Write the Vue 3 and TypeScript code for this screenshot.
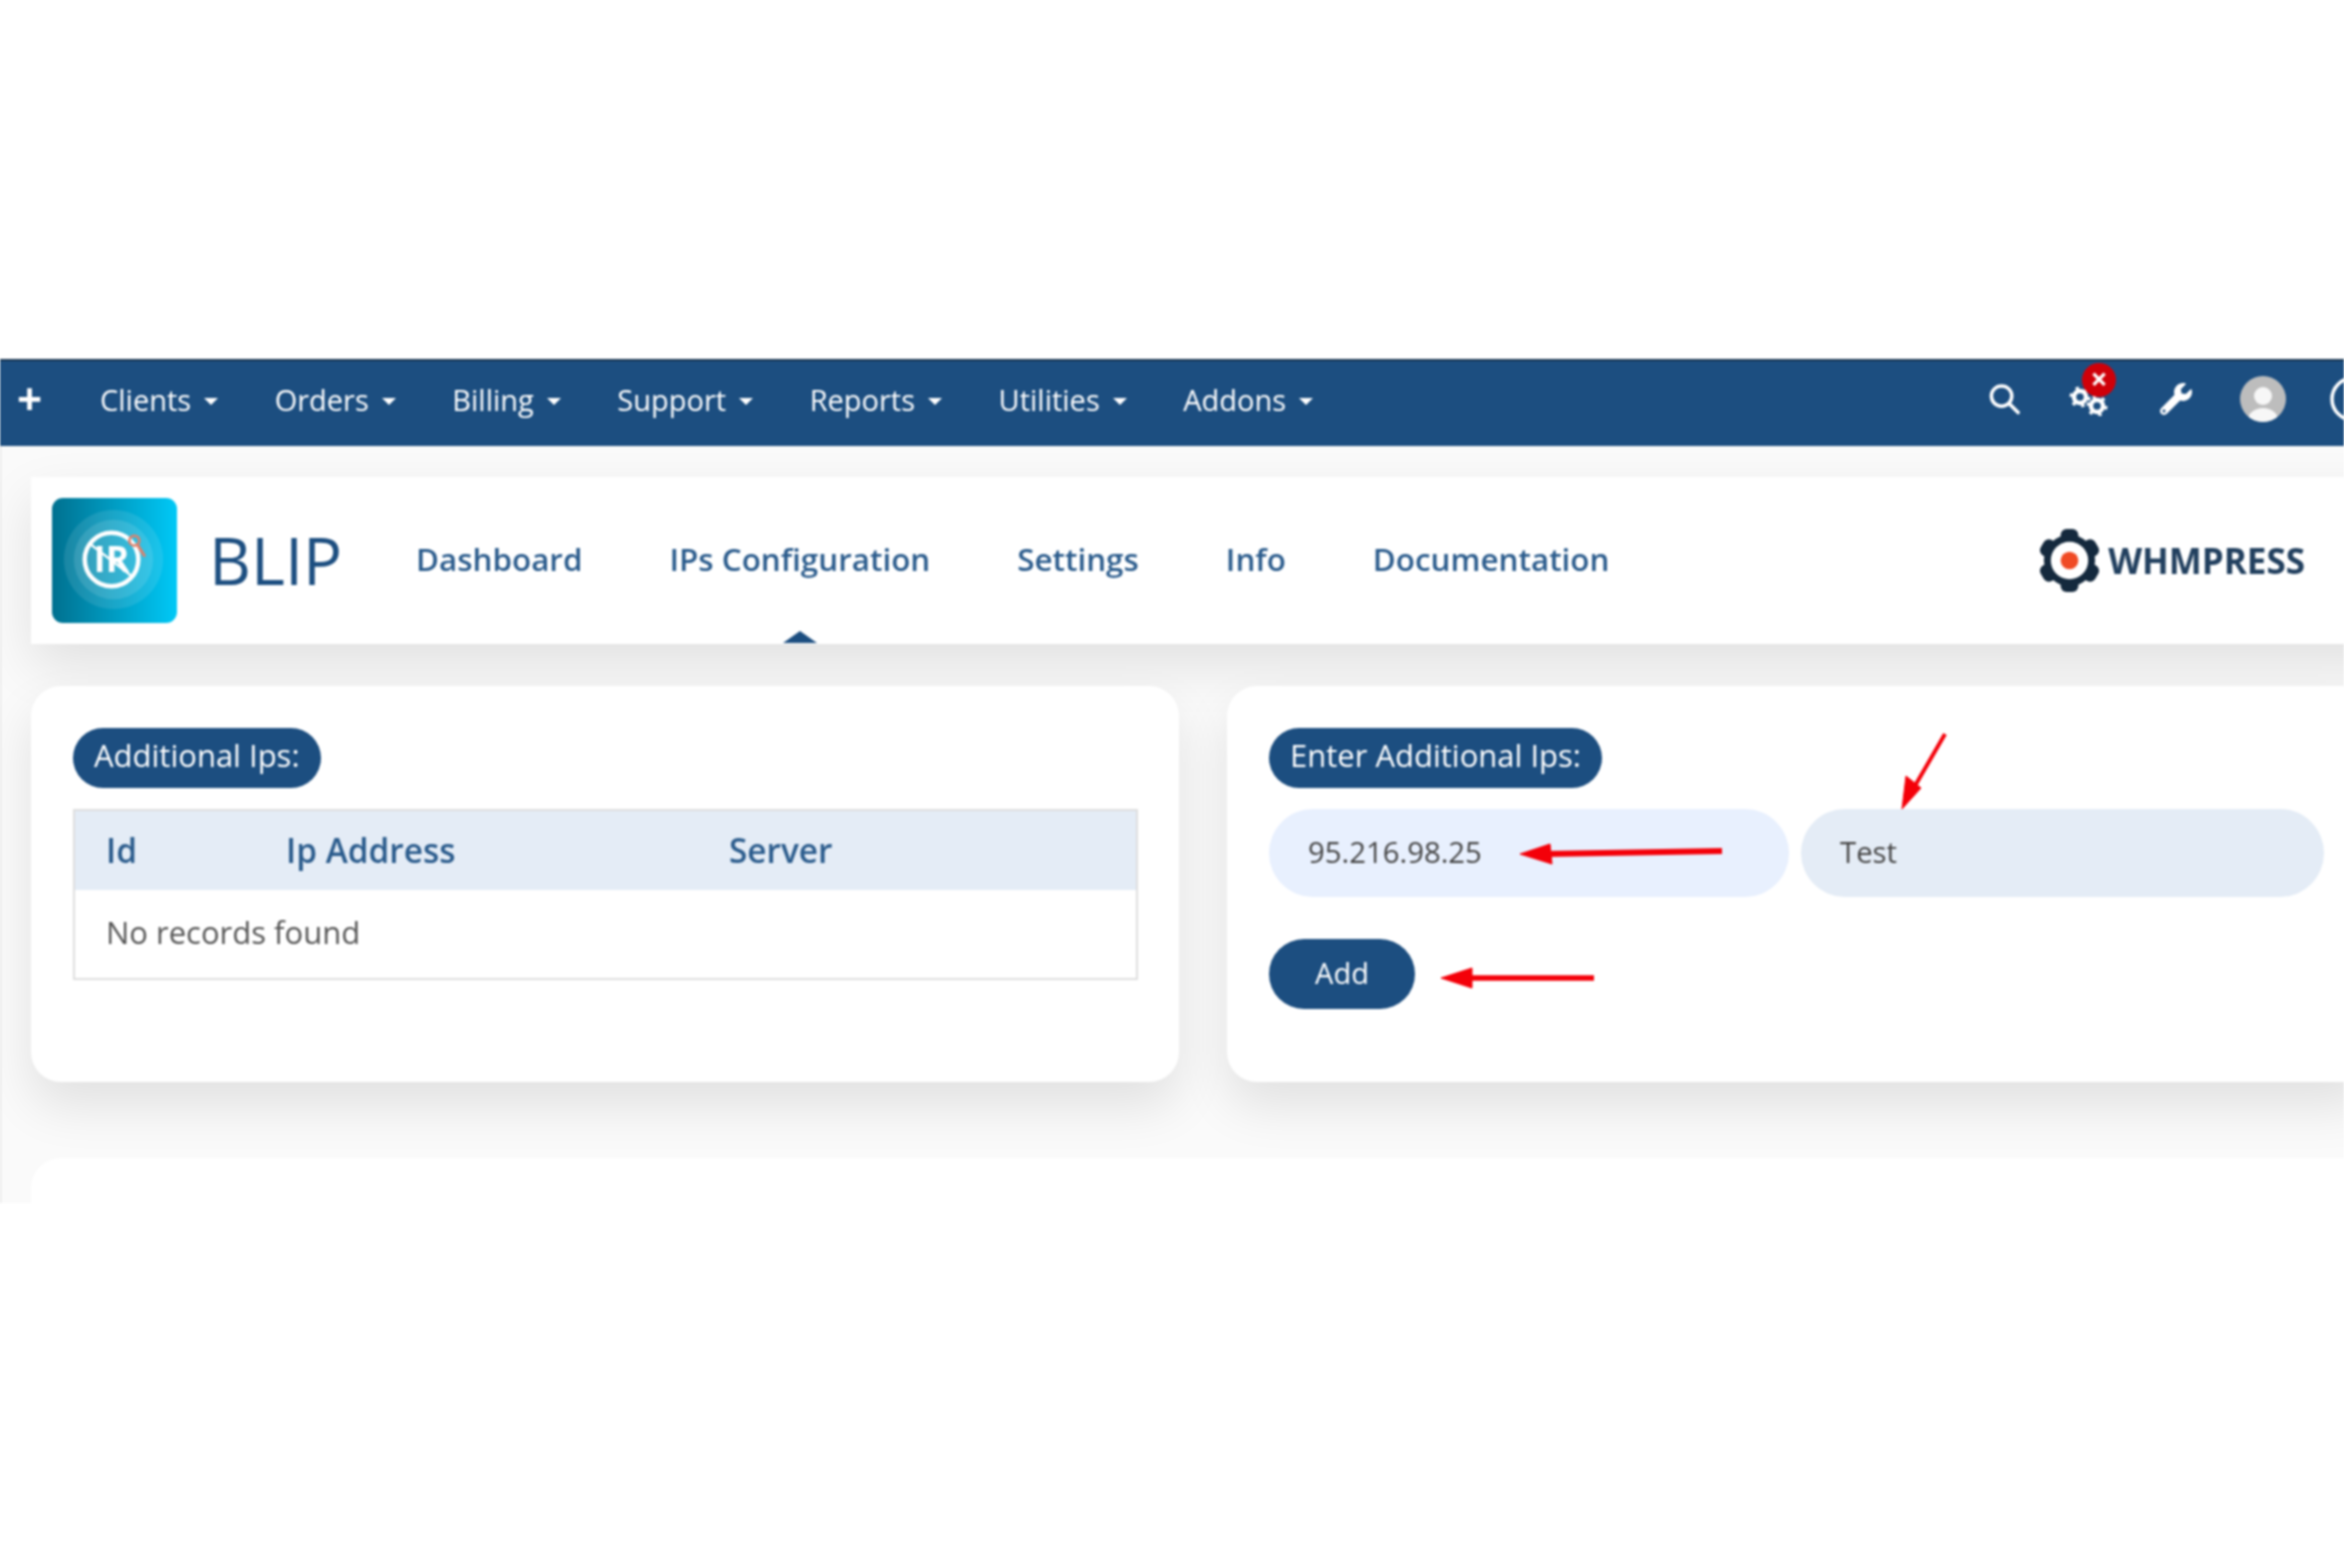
<script setup lang="ts">
const menu: string[] = ['Clients', 'Orders', 'Billing', 'Support', 'Reports', 'Utilities', 'Addons']
const tabs: string[] = ['Dashboard', 'IPs Configuration', 'Settings', 'Info', 'Documentation']
const teeth: number[] = [0, 60, 120, 180, 240, 300]
</script>

<template>
  <div class="canvas">
    <div class="shot">
      <nav class="topbar">
        <span class="plus">+</span>
        <ul class="menu">
          <li v-for="m in menu" :key="m" class="menu-item">{{ m }}<i class="caret"></i></li>
        </ul>
        <div class="tools">
          <svg class="ico search" viewBox="0 0 34 32" fill="none" stroke="#fff" stroke-width="3.6" stroke-linecap="round">
            <circle cx="14" cy="13" r="10.5" />
            <path d="M22 21l9 9" />
          </svg>
          <span class="gears">
            <svg viewBox="0 0 40 30" width="40" height="30">
              <g fill="none" stroke="#fff">
                <circle cx="12" cy="11" r="6" stroke-width="4.5" />
                <circle cx="12" cy="11" r="9" stroke-width="3" stroke-dasharray="3.4 6.02" />
                <circle cx="29" cy="20" r="6" stroke-width="4.5" />
                <circle cx="29" cy="20" r="9" stroke-width="3" stroke-dasharray="3.4 6.02" />
              </g>
            </svg>
            <b class="badge">×</b>
          </span>
          <svg class="ico wrench" viewBox="0 0 512 512" fill="#fff">
            <path d="M507.73 109.1c-2.24-9.03-13.54-12.09-20.12-5.51l-74.36 74.36-67.88-11.31-11.31-67.88 74.36-74.36c6.62-6.62 3.43-17.9-5.66-20.16-47.38-11.74-99.55.91-136.58 37.93-39.64 39.64-50.55 97.1-34.05 147.2L18.74 402.76c-24.99 24.99-24.99 65.51 0 90.5 24.99 24.99 65.51 24.99 90.5 0l213.21-213.21c50.12 16.71 107.47 5.68 147.37-34.22 37.07-37.07 49.7-89.32 37.91-136.73zM64 472c-13.25 0-24-10.75-24-24 0-13.26 10.75-24 24-24s24 10.74 24 24c0 13.25-10.75 24-24 24z" />
          </svg>
          <svg class="avatar" viewBox="0 0 46 46">
            <defs><clipPath id="av"><circle cx="23" cy="23" r="23" /></clipPath></defs>
            <g clip-path="url(#av)">
              <rect width="46" height="46" fill="#bdbdbd" />
              <circle cx="23" cy="20" r="9" fill="#f7f7f7" />
              <ellipse cx="23" cy="44" rx="15" ry="12" fill="#f7f7f7" />
            </g>
          </svg>
          <svg class="ring" viewBox="0 0 46 46" fill="none" stroke="#fff" stroke-width="3.5">
            <circle cx="23" cy="23" r="21" />
          </svg>
        </div>
      </nav>

      <main class="page">
        <header class="head">
          <svg class="logo" viewBox="0 0 126 126">
            <defs>
              <linearGradient id="lg" x1="0" x2="1" y1="0" y2="0">
                <stop offset="0" stop-color="#00708f" />
                <stop offset="1" stop-color="#00c9f7" />
              </linearGradient>
            </defs>
            <rect width="126" height="126" rx="11" fill="url(#lg)" />
            <circle cx="62" cy="62" r="50" fill="#fff" fill-opacity=".1" />
            <circle cx="62" cy="62" r="40" fill="#fff" fill-opacity=".12" />
            <circle cx="60" cy="62" r="27" fill="none" stroke="#fff" stroke-width="4.5" />
            <text x="60" y="75" text-anchor="middle" class="logo-text">IR</text>
            <path d="M38 46l44 34" stroke="#fff" stroke-width="2.5" />
            <circle cx="83" cy="43" r="5" fill="none" stroke="#e0806a" stroke-width="2.6" />
            <path d="M86 47l7 11" stroke="#e0806a" stroke-width="3" stroke-linecap="round" />
          </svg>
          <h1 class="title">BLIP</h1>
          <ul class="tabs">
            <li v-for="t in tabs" :key="t" class="tab" :class="{ active: t === 'IPs Configuration' }">{{ t }}</li>
          </ul>
          <div class="brand">
            <svg class="brand-mark" viewBox="0 0 62 64">
              <g fill="#14293d">
                <rect v-for="a in teeth" :key="a" x="22" y="0" width="18" height="14" rx="6" :transform="`rotate(${a} 31 32)`" />
              </g>
              <circle cx="31" cy="32" r="26" fill="#14293d" />
              <circle cx="31" cy="32" r="19" fill="#fff" />
              <circle cx="31" cy="32" r="9" fill="#f04a24" />
            </svg>
            <span class="brand-text">WHMPRESS</span>
          </div>
        </header>

        <section class="panels">
          <div class="card">
            <div class="pill">Additional Ips:</div>
            <div class="table">
              <div class="thead">
                <span class="c1">Id</span>
                <span class="c2">Ip Address</span>
                <span>Server</span>
              </div>
              <div class="tbody">No records found</div>
            </div>
          </div>
          <div class="card">
            <div class="pill">Enter Additional Ips:</div>
            <div class="fields">
              <div class="field auto">95.216.98.25</div>
              <div class="field wide">Test</div>
            </div>
            <button class="add" type="button">Add</button>
          </div>
        </section>

        <div class="next"></div>
      </main>

      <svg class="marks" viewBox="0 0 2344 844" width="2344" height="844" fill="#f40009" stroke="#f40009">
        <path d="M1722 492L1545 495" stroke-width="6" fill="none" />
        <path d="M1520 495L1550 485L1552 505Z" stroke-width="1" />
        <path d="M1594 619L1465 619" stroke-width="5.5" fill="none" />
        <path d="M1441 619L1472 609L1472 629Z" stroke-width="1" />
        <path d="M1945 375L1912 432" stroke-width="4" fill="none" />
        <path d="M1902 450L1906 417L1921 429Z" stroke-width="1" />
      </svg>
    </div>
  </div>
</template>

<style>
html, body { margin: 0; background: #fff; }
</style>

<style scoped>
.canvas {
  width: 2344px;
  height: 1563px;
  padding-top: 359px;
  box-sizing: border-box;
  background: #fff;
  overflow: hidden;
  font-family: "Open Sans", "Noto Sans", sans-serif;
}
.shot {
  position: relative;
  width: 2344px;
  height: 844px;
  overflow: hidden;
  filter: blur(0.8px);
}
.topbar {
  display: flex;
  align-items: center;
  height: 87px;
  padding-bottom: 5px;
  box-sizing: border-box;
  border-top: 2px solid #17344f;
  background: #1c4e80;
  color: #fff;
  overflow: hidden;
}
.plus {
  width: 100px;
  padding-left: 17px;
  box-sizing: border-box;
  font-size: 44px;
  font-weight: 700;
  line-height: 1;
  margin-top: -6px;
}
.menu {
  display: flex;
  gap: 56.5px;
  margin: 0;
  padding: 0;
  list-style: none;
  font-size: 29px;
}
.menu-item {
  display: flex;
  align-items: center;
  gap: 13px;
  margin-top: -3px;
}
.caret {
  width: 0;
  height: 0;
  margin-top: 4px;
  border-left: 7px solid transparent;
  border-right: 7px solid transparent;
  border-top: 7px solid #fff;
}
.tools {
  display: flex;
  align-items: center;
  margin-left: auto;
  margin-top: -5px;
  margin-right: -32px;
}
.ico { display: block; }
.search { width: 33px; height: 32px; }
.gears {
  position: relative;
  display: block;
  width: 40px;
  height: 30px;
  margin-left: 47px;
  margin-top: 5px;
}
.gears svg { display: block; }
.badge {
  position: absolute;
  left: 14px;
  top: -23px;
  width: 34px;
  height: 34px;
  border-radius: 50%;
  background: #cf0009;
  color: #fff;
  font-size: 30px;
  font-weight: 700;
  line-height: 32px;
  text-align: center;
}
.wrench { width: 32px; height: 32px; margin-left: 52px; }
.avatar { display: block; width: 46px; height: 46px; margin-left: 48px; }
.ring { display: block; width: 46px; height: 46px; margin-left: 44px; }

.page {
  height: 757px;
  box-sizing: border-box;
  padding: 31px 0 0 30px;
  border-left: 1px solid #dcdcdc;
  background: #fafafa;
  overflow: hidden;
}
.head {
  display: flex;
  align-items: center;
  width: 2400px;
  height: 167px;
  box-sizing: border-box;
  padding: 0 126px 0 21px;
  background: #fff;
  box-shadow: 0 22px 50px rgba(0, 0, 0, .1);
}
.logo { display: block; width: 125px; height: 125px; flex: none; }
.logo-text {
  font-family: "Open Sans", sans-serif;
  font-size: 36px;
  font-weight: 700;
  fill: #fff;
}
.title {
  margin: 0 0 0 32px;
  width: 131px;
  color: #1c4e80;
  font-size: 65px;
  font-weight: 500;
  line-height: 1;
}
.tabs {
  display: flex;
  gap: 87px;
  align-items: center;
  margin: -5px 0 0 76px;
  padding: 0;
  list-style: none;
  color: #2a5b8c;
  font-size: 31.4px;
  font-weight: 600;
}
.tab { position: relative; }
.tab.active::after {
  content: "";
  position: absolute;
  left: 50%;
  bottom: -63px;
  margin-left: -17px;
  border-left: 17px solid transparent;
  border-right: 17px solid transparent;
  border-bottom: 12px solid #1c4e80;
}
.brand {
  display: flex;
  align-items: center;
  gap: 8px;
  margin-left: auto;
}
.brand-mark { display: block; width: 61px; height: 63px; }
.brand-text {
  color: #22405f;
  font-size: 35px;
  font-weight: 700;
}

.panels {
  display: grid;
  grid-template-columns: 1148px 1148px;
  gap: 48px;
  margin-top: 42px;
}
.card {
  height: 396px;
  box-sizing: border-box;
  padding: 42px;
  border-radius: 30px;
  background: #fff;
  box-shadow: 0 24px 50px rgba(0, 0, 0, .1);
}
.pill {
  display: inline-block;
  height: 60px;
  padding: 0 21px;
  border-radius: 30px;
  background: #1c4e80;
  color: #fff;
  font-size: 31px;
  line-height: 54px;
}
.table {
  width: 1065px;
  margin-top: 21px;
  border: 2px solid #dedede;
  box-sizing: border-box;
  height: 171px;
}
.thead {
  display: flex;
  align-items: center;
  height: 79px;
  padding: 0 0 2px 31px;
  box-sizing: border-box;
  background: #e4ecf6;
  color: #2a5b8c;
  font-size: 33.4px;
  font-weight: 600;
}
.c1 { width: 180px; }
.c2 { width: 443px; }
.tbody {
  padding: 21px 31px;
  color: #555;
  font-size: 31px;
  line-height: 42px;
}
.fields {
  display: flex;
  gap: 12px;
  margin-top: 21px;
}
.field {
  width: 520px;
  height: 88px;
  box-sizing: border-box;
  padding: 0 0 2px 39px;
  border-radius: 44px;
  background: #e8f0fe;
  color: #444;
  font-size: 29.3px;
  line-height: 86px;
}
.field.wide { width: 523px; background: #e4ecf6; }
.add {
  display: block;
  width: 146px;
  height: 70px;
  margin-top: 42px;
  padding: 0 0 4px;
  border: 0;
  border-radius: 35px;
  background: #1c4e80;
  color: #fff;
  font-family: inherit;
  font-size: 29px;
}
.next {
  width: 2400px;
  height: 120px;
  margin-top: 76px;
  border-radius: 30px;
  background: #fff;
}
.marks {
  position: absolute;
  left: 0;
  top: 0;
  pointer-events: none;
}
</style>
